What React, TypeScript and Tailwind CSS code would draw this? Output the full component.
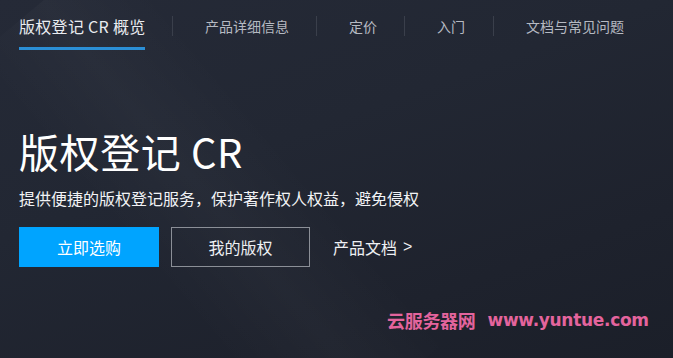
import React from "react";

const cjk = { fontFamily: '"Noto Sans CJK SC", "Noto Sans", sans-serif' };

export default function App() {
  const navItems = [
    { t: "产品详细信息", w: "w-[85px]", sep: "ml-[27px]" },
    { t: "定价", w: "w-[29px]", sep: "ml-[26px]" },
    { t: "入门", w: "w-[28px]", sep: "ml-[26px]" },
    { t: "文档与常见问题", w: "w-[98px]", sep: "ml-[28px]" },
  ];
  return (
    <div
      className="relative w-[673px] h-[358px] overflow-hidden bg-[linear-gradient(160deg,#252a37_0%,#222733_40%,#1e222d_75%,#1b1f29_100%)] text-white"
      style={cjk}
    >
      {/* diagonal light band */}
      <div className="pointer-events-none absolute left-[120px] top-[-60px] h-[520px] w-[180px] rotate-[-40deg] bg-[linear-gradient(90deg,transparent,rgba(255,255,255,0.025),transparent)]" />

      <nav className="relative flex h-[51px] items-stretch pl-[19px]">
        <div className="relative flex w-[126px] items-center">
          <span className="whitespace-nowrap text-[16px] leading-none tracking-[0.3px] text-[#e9ecf0]">版权登记 CR 概览</span>
          <div className="absolute bottom-[1px] left-0 right-0 h-[3px] bg-[#2b8fd6]" />
        </div>
        {navItems.map((it) => (
          <div key={it.t} className="flex items-center">
            <div className={`h-[20px] w-px bg-[#3a3f4b] ${it.sep}`} />
            <span className={`ml-[32px] whitespace-nowrap text-[14px] leading-none text-[#b6bac2] ${it.w}`}>{it.t}</span>
          </div>
        ))}
      </nav>

      <div className="relative flex flex-col pl-[19px] pt-[80px]">
        <h1 className="text-[40px] leading-[40px] font-normal tracking-[0.6px] text-white">版权登记 CR</h1>
        <p className="mt-[18px] text-[16px] leading-[18px] text-[#f2f3f5]">
          提供便捷的版权登记服务，保护著作权人权益，避免侵权
        </p>
        <div className="mt-[20px] flex items-center">
          <button className="flex h-[40px] w-[140px] items-center justify-center bg-[#00a4ff] text-[16px] text-white">
            立即选购
          </button>
          <button className="ml-[12px] flex h-[40px] w-[139px] items-center justify-center border border-[#8b8f97] text-[16px] text-[#eef0f3]">
            我的版权
          </button>
          <span className="ml-[23px] flex items-center text-[16px] text-[#eef0f3]">
            产品文档
            <span className="ml-[6px]" style={{ fontFamily: '"Liberation Sans", sans-serif' }}>&gt;</span>
          </span>
        </div>
      </div>

      <div
        className="absolute left-[387px] top-[311px] flex items-center text-[#e4649d]"
        style={{ fontFamily: '"Noto Sans CJK SC", "DejaVu Sans", sans-serif' }}
      >
        <span className="text-[18px] font-bold leading-none tracking-[-0.3px]">云服务器网</span>
        <span
          className="ml-[12px] text-[17px] font-bold leading-none tracking-[-0.3px]"
          style={{ fontFamily: '"DejaVu Sans", sans-serif' }}
        >
          www.yuntue.com
        </span>
      </div>
    </div>
  );
}
